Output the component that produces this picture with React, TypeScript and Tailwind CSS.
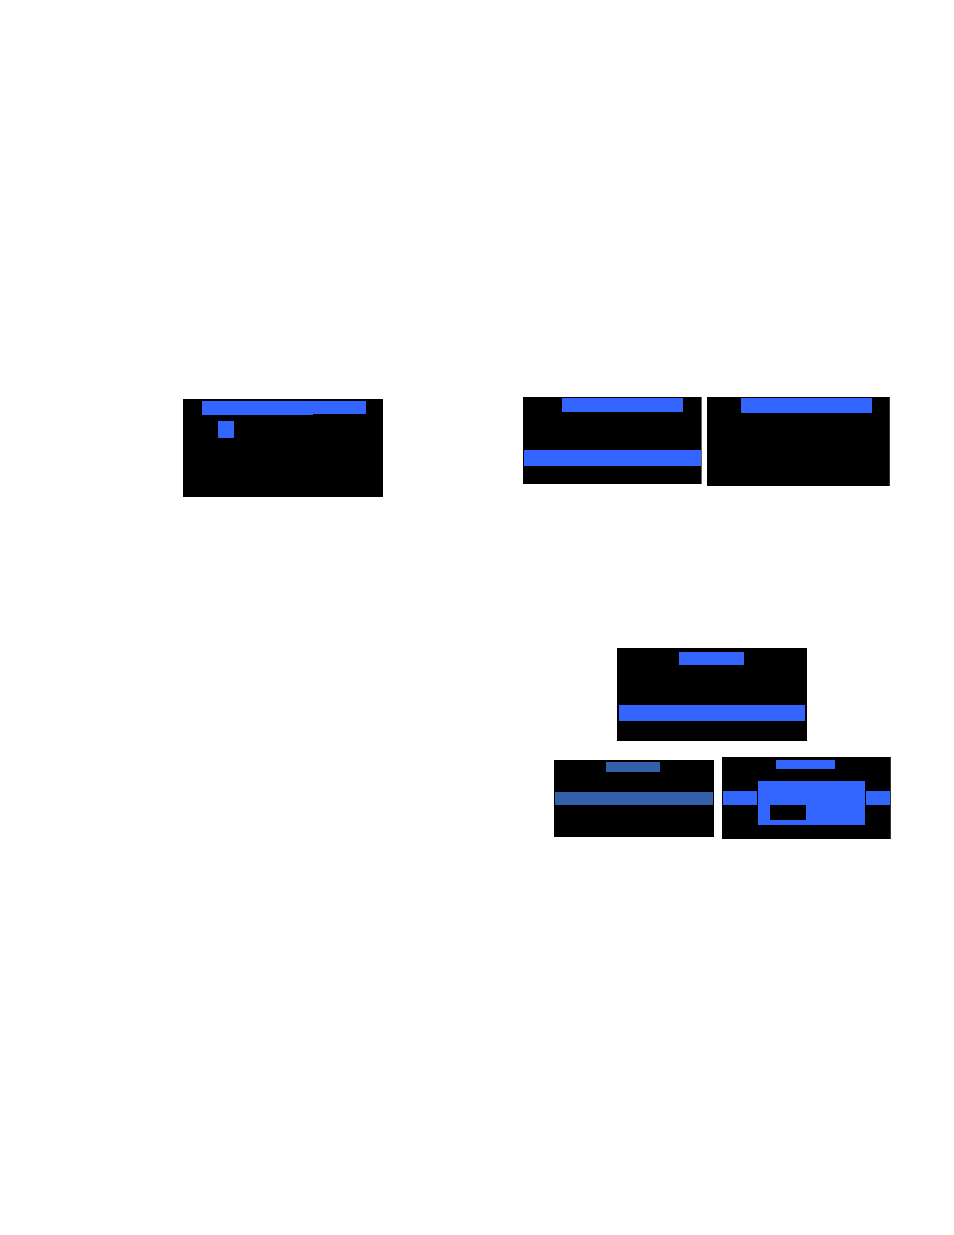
import type { ReactNode } from "react";

function Screen({ className, children }: { className: string; children: ReactNode }) {
  return <section className={`relative shrink-0 bg-black ${className}`}>{children}</section>;
}

export default function App() {
  return (
    <main className="flex min-h-screen items-start justify-between bg-white pt-[397px] pr-[63px] pl-[183px]">
      <Screen className="mt-[2px] h-[98px] w-[200px] pt-[2px] pl-[19px]">
        <div className="flex h-5 items-start">
          <div className="h-[14px] w-[111px] bg-[#3366ff]" />
          <div className="h-[13px] w-[53px] bg-[#3366ff]" />
        </div>
        <div className="ml-4 h-[17px] w-4 bg-[#3366ff]" />
      </Screen>

      <div className="flex flex-col items-end">
        <div className="mr-px flex items-start gap-[5px]">
          <Screen className="h-[87px] w-[179px] border-r border-[#666666] pt-px pl-px">
            <div className="ml-[38px] h-[14px] w-[121px] bg-[#3366ff]" />
            <div className="mt-[38px] h-4 bg-[#3366ff]" />
          </Screen>
          <Screen className="h-[89px] w-[183px] border-r border-[#333333] pt-px">
            <div className="ml-[34px] h-[15px] w-[131px] bg-[#3366ff]" />
          </Screen>
        </div>

        <Screen className="mt-[162px] mr-[84px] h-[93px] w-[190px] px-[2px] pt-1">
          <div className="ml-[60px] h-[13px] w-[65px] bg-[#3366ff]" />
          <div className="mt-10 h-4 bg-[#3366ff]" />
        </Screen>

        <div className="mt-4 flex items-start gap-2">
          <Screen className="mt-[3px] h-[77px] w-[160px] px-px pt-[2px]">
            <div className="ml-[51px] h-[10px] w-[54px] bg-[#3360a8]" />
            <div className="mt-5 h-[13px] bg-[#3360a8]" />
          </Screen>
          <Screen className="h-[82px] w-[169px] border-r border-[#333333] pt-[3px] pl-px">
            <div className="ml-[53px] h-[9px] w-[59px] bg-[#3366ff]" />
            <div className="mt-[22px] h-[14px] bg-[#3366ff]" />
            {/* popup over the selected row */}
            <div className="absolute top-[23px] left-[35px] h-[46px] w-[109px] border border-black bg-[#3366ff] pt-6 pl-3">
              <div className="h-[15px] w-9 bg-black" />
            </div>
          </Screen>
        </div>
      </div>
    </main>
  );
}
